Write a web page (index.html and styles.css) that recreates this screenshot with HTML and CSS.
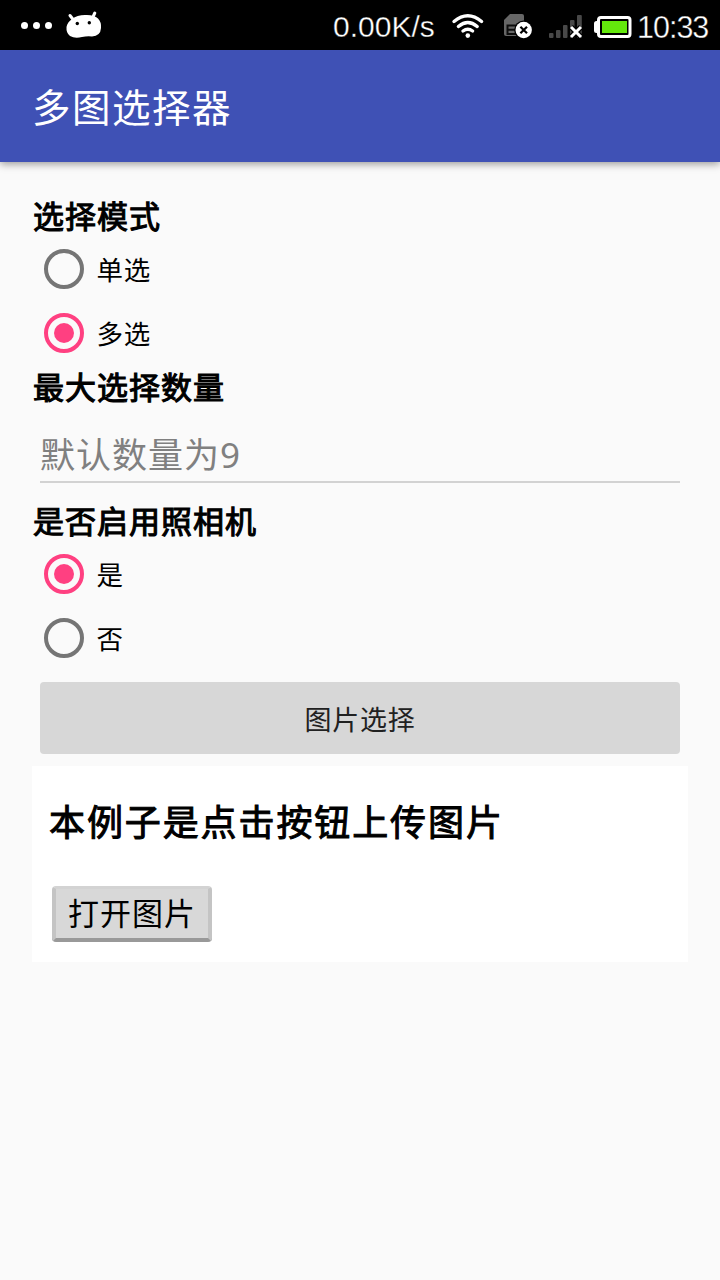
FILE: index.html
```html
<!DOCTYPE html>
<html lang="zh-CN">
<head>
<meta charset="utf-8">
<title>多图选择器</title>
<link rel="stylesheet" href="styles.css">
</head>
<body>
<header class="status">
  <svg class="notices" width="110" height="50" viewBox="0 0 110 50" fill="#fff">
    <circle cx="24.5" cy="25.5" r="3.5"/><circle cx="36.5" cy="25.5" r="3.5"/><circle cx="48.5" cy="25.5" r="3.5"/>
    <path d="M72 19Q77 15 85 15Q94 14.500 98 18.500Q101.500 22 101 28Q100.500 36 92 36.500Q87 36 82 37Q75 39 70 36Q66 33 66.500 27Q67.500 22 72 19Z"/>
    <path d="M70 15.500L73.500 20M94.800 13L92.500 18" stroke="#fff" stroke-width="3" stroke-linecap="round"/>
    <circle cx="77.300" cy="23.500" r="1.700" fill="#000"/><circle cx="89.300" cy="22.800" r="1.700" fill="#000"/>
  </svg>
  <span class="speed">0.00K/s</span>
  <svg class="signals" width="190" height="50" viewBox="445 0 190 50">
    <g fill="none" stroke="#fff" stroke-width="3.400" stroke-linecap="round">
      <path d="M454 21.500Q467.800 10 481.600 21.500M458.400 26.500Q467.800 18.500 477.200 26.500M463 31Q467.800 27.500 472.600 31"/>
    </g>
    <circle cx="467.800" cy="35.600" r="2.300" fill="#fff"/>
    <path d="M504 20L510 14H522Q524 14 524 16V36H506Q504 36 504 34Z" fill="#666"/>
    <path d="M516 25.500H507.500V34H516M507.500 29.800H516" fill="none" stroke="#0c0c0c" stroke-width="2"/>
    <circle cx="523.700" cy="30" r="9.500" fill="#000"/>
    <circle cx="523.700" cy="30" r="8.200" fill="#fff"/>
    <path d="M520.400 26.700L527 33.300M527 26.700L520.400 33.300" stroke="#000" stroke-width="2.200"/>
    <g fill="#484848"><rect x="549" y="33" width="4.500" height="5" rx="1"/><rect x="556" y="30" width="4.500" height="8" rx="1"/><rect x="563" y="25" width="4.500" height="13" rx="1"/><rect x="570" y="20" width="4.500" height="18" rx="1"/><rect x="577" y="15" width="4.800" height="23" rx="1"/></g>
    <path d="M571 27L581 37M581 27L571 37" stroke="#000" stroke-width="5.500"/>
    <path d="M571 27L581 37M581 27L571 37" stroke="#fff" stroke-width="3"/>
    <rect x="594" y="21" width="6" height="12" rx="2.500" fill="#fff"/>
    <rect x="598.500" y="17.500" width="31.500" height="19" rx="2.500" fill="#000" stroke="#fff" stroke-width="3"/>
    <rect x="602" y="21" width="25" height="12" fill="#64e80c"/>
  </svg>
  <span class="clock">10:33</span>
</header>
<div class="appbar"><h1 class="title">多图选择器</h1></div>
<main class="content">
  <h2 class="label">选择模式</h2>
  <div class="option"><span class="radio"></span><span class="caption">单选</span></div>
  <div class="option"><span class="radio checked"></span><span class="caption">多选</span></div>
  <h2 class="label">最大选择数量</h2>
  <div class="field">默认数量为<span class="digit">9</span></div>
  <h2 class="label">是否启用照相机</h2>
  <div class="option"><span class="radio checked"></span><span class="caption">是</span></div>
  <div class="option"><span class="radio"></span><span class="caption">否</span></div>
  <div class="pick">图片选择</div>
  <section class="card">
    <h3 class="heading">本例子是点击按钮上传图片</h3>
    <div class="open">打开图片</div>
  </section>
</main>
</body>
</html>
```
FILE: styles.css
```css
* { box-sizing: border-box; }
body {
  margin: 0;
  min-height: 1280px;
  background: #fafafa;
  color: #000;
  font-family: "Noto Sans CJK SC", sans-serif;
}
h1, h2, h3 { margin: 0; font-weight: 400; }
svg { display: block; flex: none; }
.status {
  display: flex;
  height: 50px;
  background: #000;
  color: #fff;
  white-space: nowrap;
}
.speed {
  width: 112px;
  margin-left: 223px;
  font: 30px/53px "Liberation Sans", Arial, sans-serif;
  -webkit-text-stroke: 0.35px #000;
}
.clock {
  margin-left: 2px;
  font: 30.5px/54px "Liberation Sans", Arial, sans-serif;
  letter-spacing: -1px;
  -webkit-text-stroke: 0.35px #000;
}
.appbar {
  display: flex;
  align-items: center;
  height: 112px;
  padding-left: 32px;
  background: #3f51b5;
  box-shadow: 0 2px 8px rgba(0, 0, 0, 0.4);
}
.title {
  padding-bottom: 2px;
  font-size: 38.5px;
  line-height: 108px;
  letter-spacing: 1.5px;
  color: #fff;
}
.content { padding: 32px; }
.label {
  height: 43px;
  padding-left: 1px;
  font-size: 31px;
  line-height: 41px;
  letter-spacing: 1px;
  -webkit-text-stroke: 1.1px #000;
}
.option {
  display: flex;
  align-items: center;
  gap: 12.5px;
  height: 64px;
  padding-left: 12px;
  font-size: 26.5px;
  letter-spacing: 0.8px;
}
.caption { padding-bottom: 2px; }
.radio {
  display: grid;
  place-items: center;
  width: 40px;
  height: 40px;
  border: 4px solid #757575;
  border-radius: 50%;
}
.checked { border-color: #ff4081; }
.checked::after {
  content: "";
  width: 20px;
  height: 20px;
  border-radius: 50%;
  background: #ff4081;
}
.field {
  height: 59px;
  margin: 16px 8px;
  border-bottom: 2px solid #d2d2d2;
  font-size: 35px;
  line-height: 57px;
  letter-spacing: 1px;
  color: #808080;
}
.digit { font-family: "Noto Sans", sans-serif; line-height: 1; }
.pick {
  height: 72px;
  margin: 12px 8px;
  border-radius: 4px;
  background: #d7d7d7;
  color: #212121;
  font-size: 27px;
  line-height: 73px;
  letter-spacing: 0.8px;
  text-align: center;
}
.card { height: 196px; padding: 26px 17px 20px; background: #fff; }
.heading {
  height: 60px;
  font-size: 36px;
  line-height: 57px;
  letter-spacing: 1.9px;
  -webkit-text-stroke: 1px #000;
}
.open {
  width: 160px;
  height: 56px;
  margin: 34px 3px 0;
  border: solid;
  border-width: 3px 4px 4px;
  border-color: #d3d3d3 #c4c4c4 #999 #c4c4c4;
  border-radius: 4px;
  background: #d8d8d8;
  font-size: 31px;
  line-height: 45px;
  letter-spacing: 1px;
  text-align: center;
}
```
